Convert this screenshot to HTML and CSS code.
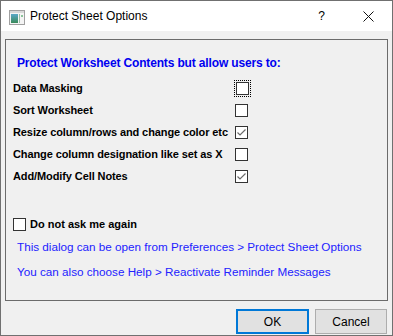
FILE: index.html
```html
<!DOCTYPE html>
<html>
<head>
<meta charset="utf-8">
<link rel="stylesheet" href="styles.css">
</head>
<body>
<div class="window">
  <div class="titlebar">
    <svg class="appicon" width="16" height="15" viewBox="0 0 16 15">
      <rect x="0.5" y="0.5" width="15" height="14" fill="#f4f4f4" stroke="#a0a0a0"/>
      <rect x="1" y="1" width="14" height="2" fill="#d8d8d8"/>
      <defs>
        <linearGradient id="g" x1="0" y1="0" x2="0" y2="1">
          <stop offset="0" stop-color="#5aa8c8"/>
          <stop offset="1" stop-color="#3a8a5a"/>
        </linearGradient>
      </defs>
      <rect x="2" y="4" width="7" height="9" fill="url(#g)"/>
      <rect x="10" y="4" width="1" height="9" fill="#9ac0a8"/>
      <rect x="12" y="5" width="2" height="2" fill="#8cc49a"/>
    </svg>
    <span class="title">Protect Sheet Options</span>
    <span class="help">?</span>
    <svg class="close" width="11" height="11" viewBox="0 0 11 11">
      <path d="M0.5 0.5 L10.5 10.5 M10.5 0.5 L0.5 10.5" stroke="#111" stroke-width="1"/>
    </svg>
  </div>
  <div class="body">
    <div class="group">
      <div class="heading">Protect Worksheet Contents but allow users to:</div>
      <div class="opts">
        <div class="row"><span class="label">Data Masking</span><span class="focus"><span class="cb"></span></span></div>
        <div class="row"><span class="label">Sort Worksheet</span><span class="cb"></span></div>
        <div class="row"><span class="label">Resize column/rows and change color etc</span><span class="cb checked"><svg width="11" height="11" viewBox="0 0 11 11"><path d="M1.5 5.5 L4 8 L9.5 2.5" fill="none" stroke="#6a6a6a" stroke-width="1.2"/></svg></span></div>
        <div class="row"><span class="label">Change column designation like set as X</span><span class="cb"></span></div>
        <div class="row"><span class="label">Add/Modify Cell Notes</span><span class="cb checked"><svg width="11" height="11" viewBox="0 0 11 11"><path d="M1.5 5.5 L4 8 L9.5 2.5" fill="none" stroke="#6a6a6a" stroke-width="1.2"/></svg></span></div>
      </div>
      <div class="ask"><span class="cb"></span><span class="label">Do not ask me again</span></div>
      <div class="note">This dialog can be open from Preferences &gt; Protect Sheet Options</div>
      <div class="note second">You can also choose Help &gt; Reactivate Reminder Messages</div>
    </div>
    <div class="buttons">
      <button class="btn ok">OK</button>
      <button class="btn">Cancel</button>
    </div>
  </div>
</div>
</body>
</html>
```
FILE: styles.css
```css
html, body {
  margin: 0;
  padding: 0;
  background: #f0f0f0;
}
.window {
  width: 393px;
  height: 336px;
  box-sizing: border-box;
  border: 1px solid #707070;
  background: #f0f0f0;
  display: flex;
  flex-direction: column;
  font-family: "Liberation Sans", Arial, sans-serif;
  font-size: 11px;
  color: #000;
}
.titlebar {
  height: 30px;
  background: #fff;
  display: flex;
  align-items: center;
  flex: none;
}
.appicon {
  margin-left: 8px;
  margin-top: 2px;
}
.title {
  margin-left: 5px;
  font-family: "Liberation Sans", Arial, sans-serif;
  font-size: 12px;
  color: #000;
  flex: 1;
}
.help {
  font-family: "Liberation Sans", Arial, sans-serif;
  font-size: 12px;
  margin-right: 38px;
}
.close {
  margin-right: 18px;
}
.body {
  flex: 1;
  padding: 8px 4px 0 4px;
  display: flex;
  flex-direction: column;
}
.group {
  width: 383px;
  height: 262px;
  box-sizing: border-box;
  border: 1px solid #6b6b6b;
  padding: 12px 0 0 7px;
}
.heading {
  height: 22px;
  line-height: 22px;
  padding-left: 4px;
  font-weight: bold;
  font-size: 12px;
  letter-spacing: -0.15px;
  color: #0000f0;
}
.opts {
  margin-top: 3px;
}
.row {
  height: 22px;
  display: flex;
  align-items: center;
}
.label {
  font-weight: bold;
}
.row .label {
  width: 222px;
  white-space: nowrap;
  letter-spacing: -0.1px;
}
.cb {
  width: 13px;
  height: 13px;
  box-sizing: border-box;
  border: 1px solid #333;
  background: #fff;
  display: flex;
  align-items: center;
  justify-content: center;
}
.focus {
  margin-left: -1px;
  padding: 1px;
  border: 1px dotted #000;
  margin-top: 1px;
}
.ask {
  margin-top: 26px;
  height: 22px;
  display: flex;
  align-items: center;
}
.ask .label {
  margin-left: 4px;
}
.note {
  margin-top: 1px;
  height: 22px;
  line-height: 22px;
  padding-left: 4px;
  color: #2222ff;
  font-size: 11.7px;
}
.note.second {
  margin-top: 3px;
}
.buttons {
  display: flex;
  justify-content: flex-end;
  gap: 6px;
  margin-top: 8px;
  padding-right: 1px;
}
.btn {
  width: 72px;
  height: 25px;
  box-sizing: border-box;
  border: 1px solid #adadad;
  background: #e1e1e1;
  font-family: "Liberation Sans", Arial, sans-serif;
  font-size: 12px;
  color: #000;
  padding: 0;
}
.btn.ok {
  width: 73px;
  border: 2px solid #0078d7;
}
```
